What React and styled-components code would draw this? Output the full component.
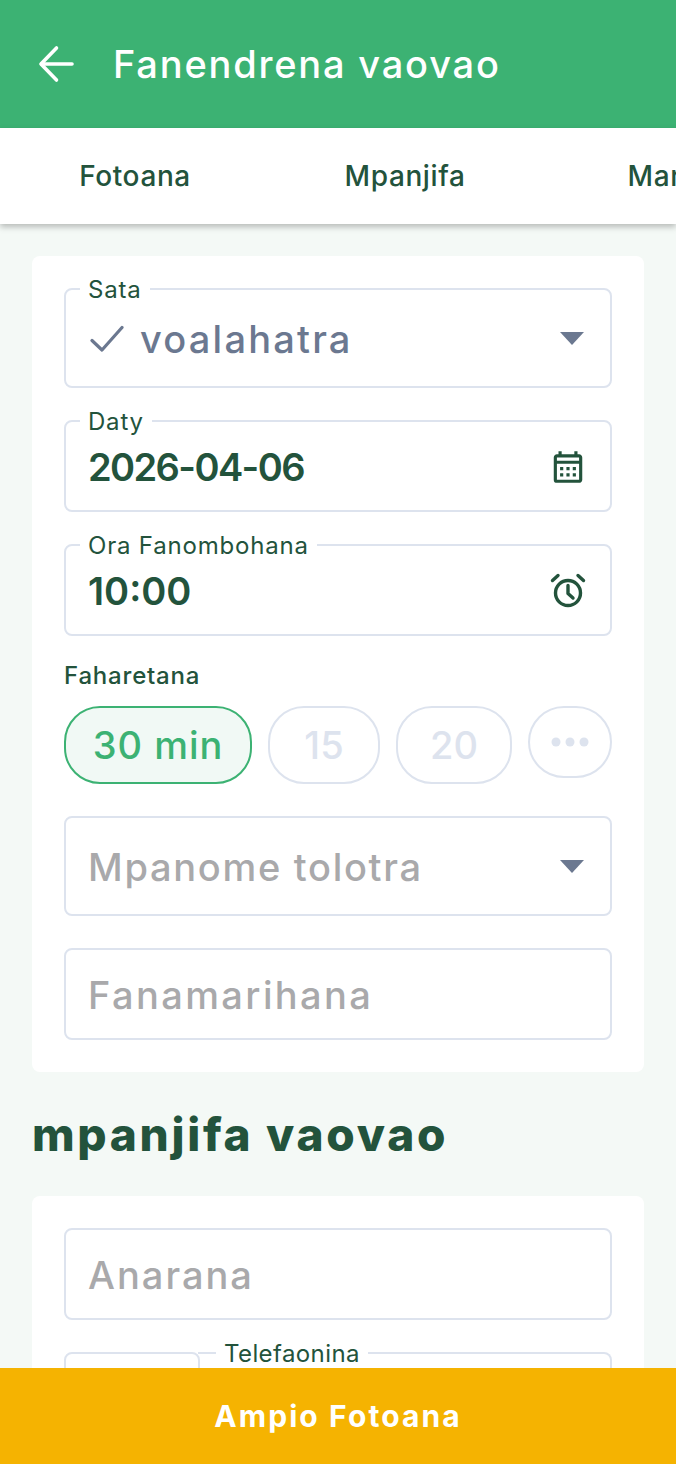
import React from "react";
import styled, { createGlobalStyle } from "styled-components";
import { MdOutlineCalendarMonth } from "react-icons/md";

const GlobalStyle = createGlobalStyle`
  html, body {
    margin: 0;
    padding: 0;
    height: 100%;
    font-family: "Inter", "Noto Sans", sans-serif;
  }
  #root {
    height: 100%;
  }
`;

const DARK = "#23533c";
const GREEN = "#3cb273";
const LINE = "#dde3ee";
const SLATE = "#6b7890";
const GREY = "#a9a9ab";

const Screen = styled.div`
  display: flex;
  flex-direction: column;
  height: 1464px;
  overflow: hidden;
  background: #f4f9f6;
`;

const Header = styled.header`
  flex: none;
  display: flex;
  align-items: center;
  gap: 37px;
  height: 128px;
  padding: 0 38px;
  background: ${GREEN};
  color: #fff;
`;

const HeaderTitle = styled.h1`
  margin: 0;
  font-size: 38px;
  font-weight: 500;
  letter-spacing: 1.8px;
  white-space: nowrap;
`;

const Tabs = styled.nav`
  flex: none;
  position: relative;
  z-index: 1;
  display: flex;
  height: 96px;
  overflow: hidden;
  background: #fff;
  box-shadow: 0 3px 6px rgba(0, 0, 0, 0.25);
`;

const Tab = styled.div`
  flex: 0 0 270px;
  display: flex;
  align-items: center;
  justify-content: center;
  font-size: 28px;
  font-weight: 500;
  letter-spacing: 0.6px;
  color: ${DARK};
`;

const Content = styled.main`
  flex: 1;
  min-height: 0;
  overflow: hidden;
  padding: 32px;
`;

const Card = styled.section`
  display: flex;
  flex-direction: column;
  gap: 32px;
  padding: 32px;
  border-radius: 8px;
  background: #fff;
`;

const Field = styled.fieldset`
  box-sizing: border-box;
  min-width: 0;
  height: ${(props) => props.$height || 92}px;
  margin: 0;
  padding: 0;
  border: 2px solid ${LINE};
  border-radius: 8px;
`;

const Legend = styled.legend`
  height: 2px;
  margin-left: 14px;
  padding: 0 8px;
  font-size: 24px;
  line-height: 3px;
  letter-spacing: 0.8px;
  color: ${DARK};
`;

const FieldInner = styled.div`
  box-sizing: border-box;
  display: flex;
  align-items: center;
  justify-content: space-between;
  height: ${(props) => (props.$height || 92) - 6}px;
  padding: 3px 23px 0 22px;
`;

const Value = styled.div`
  display: flex;
  align-items: center;
  gap: 16px;
  font-size: 38px;
  font-weight: ${(props) => props.$weight || 500};
  letter-spacing: ${(props) => props.$spacing || 0}px;
  color: ${(props) => props.$color || DARK};
`;

const Caret = styled.span`
  width: 0;
  height: 0;
  margin-right: 3px;
  border-left: 12px solid transparent;
  border-right: 12px solid transparent;
  border-top: 13px solid ${SLATE};
`;

const Duration = styled.div`
  display: flex;
  flex-direction: column;
  gap: 22px;
`;

const DurationLabel = styled.div`
  font-size: 24px;
  line-height: 16px;
  font-weight: 500;
  letter-spacing: 0.8px;
  color: ${DARK};
`;

const Chips = styled.div`
  display: flex;
  align-items: flex-start;
  justify-content: space-between;
`;

const Chip = styled.div`
  display: flex;
  align-items: center;
  justify-content: center;
  box-sizing: border-box;
  width: ${(props) => props.$width}px;
  height: ${(props) => props.$h || 78}px;
  border: 2px solid ${(props) => (props.$active ? GREEN : LINE)};
  border-radius: 36px;
  background: ${(props) => (props.$active ? "#f1f9f5" : "#fff")};
  color: ${(props) => (props.$active ? GREEN : LINE)};
  font-size: 38px;
  font-weight: 500;
  letter-spacing: ${(props) => (props.$active ? 1 : 0)}px;
`;

const SectionTitle = styled.h2`
  margin: 32px 0;
  font-size: 46px;
  line-height: 60px;
  font-weight: 800;
  letter-spacing: 2.7px;
  color: ${DARK};
`;

const PhoneRow = styled.div`
  display: flex;
`;

const CodeBox = styled.div`
  flex: 0 0 136px;
  box-sizing: border-box;
  height: 92px;
  border: 2px solid ${LINE};
  border-radius: 8px;
`;

const PhoneField = styled(Field)`
  flex: 1;
  margin-left: -2px;
  border-left: none;
  border-radius: 0 8px 8px 0;
`;

const PhoneLegend = styled(Legend)`
  margin-left: 18px;
  letter-spacing: 0.4px;
`;

const Footer = styled.footer`
  flex: none;
  display: flex;
  align-items: center;
  justify-content: center;
  height: 96px;
  background: #f5b301;
  color: #fff;
  font-size: 30px;
  font-weight: 700;
  letter-spacing: 2.1px;
`;

const BackIcon = () => (
  <svg width="38" height="38" viewBox="0 0 38 38" fill="none" stroke="#fff" strokeWidth="3.6" strokeLinecap="round" strokeLinejoin="round">
    <path d="M34 19H3.5" />
    <path d="M18.5 3L3 19L18.5 35" />
  </svg>
);

const CheckIcon = () => (
  <svg width="36" height="28" viewBox="0 0 36 28" fill="none" stroke={SLATE} strokeWidth="3.2" strokeLinecap="round" strokeLinejoin="round">
    <path d="M4 15.5L14 25L34 2.5" />
  </svg>
);

const AlarmIcon = () => (
  <svg width="38" height="38" viewBox="0 0 38 38" fill="none" stroke={DARK} strokeWidth="3.4" strokeLinecap="round" strokeLinejoin="round">
    <circle cx="19" cy="21" r="12.5" />
    <path d="M19 13.5V21.5L24 26" />
    <path d="M3.5 8.5L9 3.5" />
    <path d="M34.5 8.5L29 3.5" />
  </svg>
);

const Dots = () => (
  <svg width="38" height="10" viewBox="0 0 38 10" fill={LINE}>
    <circle cx="5" cy="5" r="4.5" />
    <circle cx="19" cy="5" r="4.5" />
    <circle cx="33" cy="5" r="4.5" />
  </svg>
);

const App = () => {
  return (
    <Screen>
      <GlobalStyle />
      <Header>
        <BackIcon />
        <HeaderTitle>Fanendrena vaovao</HeaderTitle>
      </Header>
      <Tabs>
        <Tab>Fotoana</Tab>
        <Tab>Mpanjifa</Tab>
        <Tab>Marika</Tab>
      </Tabs>
      <Content>
        <Card>
          <Field $height={100}>
            <Legend>Sata</Legend>
            <FieldInner $height={100}>
              <Value $color={SLATE} $spacing={2.2}>
                <CheckIcon />
                voalahatra
              </Value>
              <Caret />
            </FieldInner>
          </Field>
          <Field>
            <Legend>Daty</Legend>
            <FieldInner>
              <Value $spacing={-1.6} $weight={600}>2026-04-06</Value>
              <MdOutlineCalendarMonth size={38} color={DARK} />
            </FieldInner>
          </Field>
          <Field>
            <Legend>Ora Fanombohana</Legend>
            <FieldInner>
              <Value $weight={600}>10:00</Value>
              <AlarmIcon />
            </FieldInner>
          </Field>
          <Duration>
            <DurationLabel>Faharetana</DurationLabel>
            <Chips>
              <Chip $active $width={188}>30 min</Chip>
              <Chip $width={112}>15</Chip>
              <Chip $width={116}>20</Chip>
              <Chip $width={84} $h={72}><Dots /></Chip>
            </Chips>
          </Duration>
          <Field $height={100}>
            <FieldInner $height={100}>
              <Value $color={GREY} $spacing={1.7}>Mpanome tolotra</Value>
              <Caret />
            </FieldInner>
          </Field>
          <Field>
            <FieldInner>
              <Value $color={GREY} $spacing={2.4}>Fanamarihana</Value>
            </FieldInner>
          </Field>
        </Card>
        <SectionTitle>mpanjifa vaovao</SectionTitle>
        <Card>
          <Field>
            <FieldInner>
              <Value $color={GREY} $spacing={2}>Anarana</Value>
            </FieldInner>
          </Field>
          <PhoneRow>
            <CodeBox />
            <PhoneField>
              <PhoneLegend>Telefaonina</PhoneLegend>
            </PhoneField>
          </PhoneRow>
        </Card>
      </Content>
      <Footer>Ampio Fotoana</Footer>
    </Screen>
  );
};

export default App;
